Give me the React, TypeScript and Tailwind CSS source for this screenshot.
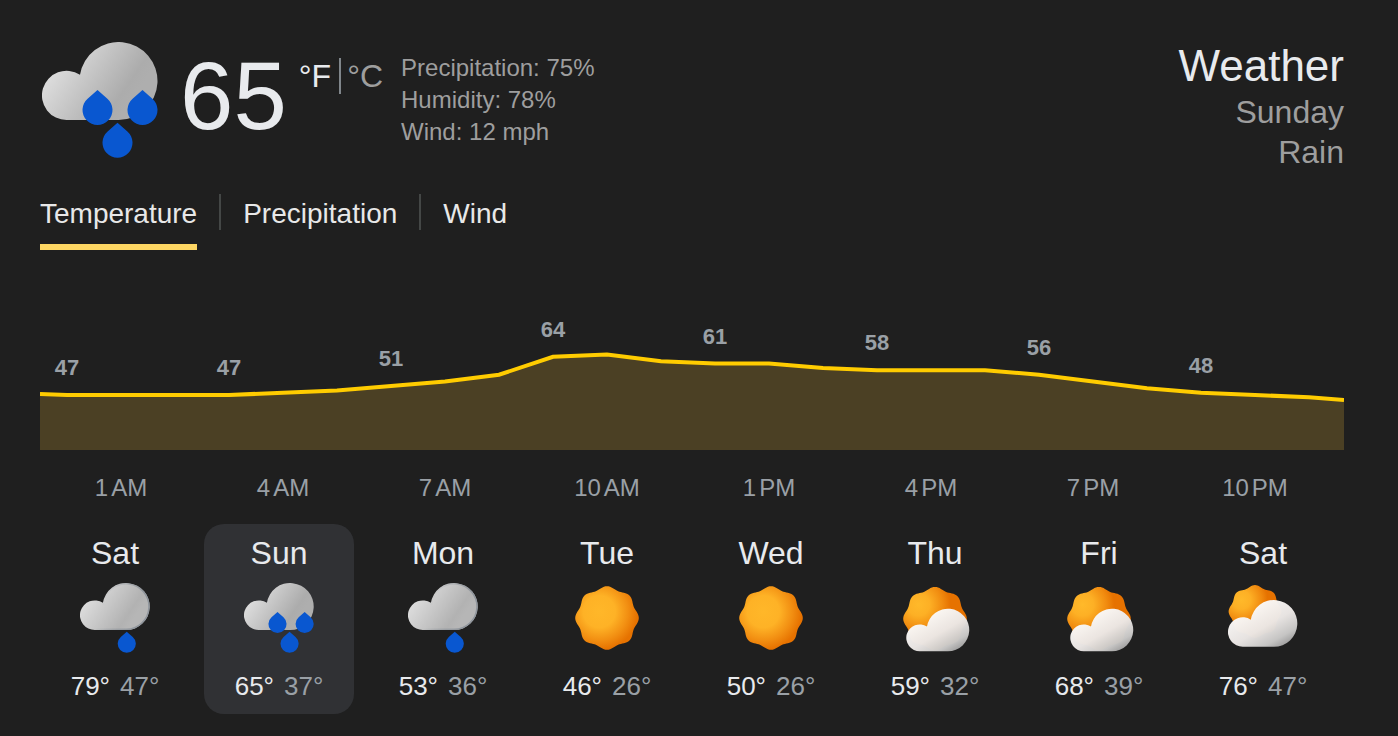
import { useId, useState } from "react";
import clsx from "clsx";

type IconName = "drizzle" | "rain" | "sunny" | "partly" | "mostly";

const HOURLY = [47, 47, 47, 47, 48, 49, 51, 53, 56, 64, 65, 62, 61, 61, 59, 58, 58, 58, 56, 53, 50, 48, 47, 46];
const TIMES = [
  ["1", "AM"],
  ["4", "AM"],
  ["7", "AM"],
  ["10", "AM"],
  ["1", "PM"],
  ["4", "PM"],
  ["7", "PM"],
  ["10", "PM"],
];
const TABS = ["Temperature", "Precipitation", "Wind"];

const DAYS: { name: string; icon: IconName; label: string; high: number; low: number }[] = [
  { name: "Sat", icon: "drizzle", label: "Showers", high: 79, low: 47 },
  { name: "Sun", icon: "rain", label: "Rain", high: 65, low: 37 },
  { name: "Mon", icon: "drizzle", label: "Showers", high: 53, low: 36 },
  { name: "Tue", icon: "sunny", label: "Sunny", high: 46, low: 26 },
  { name: "Wed", icon: "sunny", label: "Sunny", high: 50, low: 26 },
  { name: "Thu", icon: "partly", label: "Partly cloudy", high: 59, low: 32 },
  { name: "Fri", icon: "partly", label: "Partly cloudy", high: 68, low: 39 },
  { name: "Sat", icon: "mostly", label: "Mostly cloudy", high: 76, low: 47 },
];

const CLOUD = "M25 78A24.6 24.6 0 1 1 38 32.8A39 39 0 1 1 76.5 78Z";
const DROP = "M0 -20L9.9 -11.3A15 15 0 1 1 -9.9 -11.3Z";

// eight-lobed disc with an outer radius just under 32
const SUN =
  "M" +
  Array.from({ length: 128 }, (_, i) => {
    const a = (i / 128) * Math.PI * 2;
    const r = 30.4 + 1.4 * Math.cos(8 * a);
    return `${(r * Math.cos(a)).toFixed(2)} ${(r * Math.sin(a)).toFixed(2)}`;
  }).join("L") +
  "Z";

function Sun({ id, transform, shaded }: { id: string; transform: string; shaded?: boolean }) {
  return (
    <g transform={transform}>
      {shaded ? (
        <radialGradient id={id} cx="0.24" cy="0.28" r="0.5">
          <stop offset="0" stopColor="#ffb92a" />
          <stop offset="0.35" stopColor="#fdb025" />
          <stop offset="0.75" stopColor="#f18c10" />
          <stop offset="1" stopColor="#e67200" />
        </radialGradient>
      ) : (
        <radialGradient id={id} cx="0.38" cy="0.4" r="0.6">
          <stop offset="0" stopColor="#ffb729" />
          <stop offset="0.42" stopColor="#feb226" />
          <stop offset="0.75" stopColor="#f28f12" />
          <stop offset="1" stopColor="#e67200" />
        </radialGradient>
      )}
      <path d={SUN} fill={`url(#${id})`} />
    </g>
  );
}

function RainCloud({ id, outlined }: { id: string; outlined?: boolean }) {
  return (
    <>
      <linearGradient id={id} gradientUnits="userSpaceOnUse" x1="20" y1="22" x2="84" y2="66">
        <stop offset="0" stopColor="#dadada" />
        <stop offset="0.85" stopColor={outlined ? "#b2b2b2" : "#acacac"} />
        <stop offset="1" stopColor={outlined ? "#b6b6b6" : "#aeaeae"} />
      </linearGradient>
      <path d={CLOUD} fill={`url(#${id})`} />
      {outlined && (
        <>
          <linearGradient id={`${id}e`} gradientUnits="userSpaceOnUse" x1="40" y1="20" x2="100" y2="40">
            <stop offset="0" stopColor="#8f959c" stopOpacity="0" />
            <stop offset="1" stopColor="#8f959c" />
          </linearGradient>
          <clipPath id={`${id}c`}>
            <path d={CLOUD} />
          </clipPath>
          <path d={CLOUD} fill="none" stroke={`url(#${id}e)`} strokeWidth="5" clipPath={`url(#${id}c)`} />
        </>
      )}
    </>
  );
}

function WhiteCloud({ id, transform }: { id: string; transform: string }) {
  return (
    <g transform={transform}>
      <linearGradient id={id} gradientUnits="userSpaceOnUse" x1="42" y1="8" x2="88" y2="88">
        <stop offset="0" stopColor="#fcfaf8" />
        <stop offset="0.45" stopColor="#ebe7e5" />
        <stop offset="0.75" stopColor="#c9c8c7" />
        <stop offset="1" stopColor="#8d8d8d" />
      </linearGradient>
      <path d={CLOUD} fill={`url(#${id})`} fillOpacity="0.98" />
    </g>
  );
}

function WeatherIcon({ name, label, className }: { name: IconName; label: string; className: string }) {
  const id = useId();
  const wet = name === "rain" || name === "drizzle";
  return (
    <svg role="img" aria-label={label} viewBox={wet ? "0 0 116 116" : "0 0 70 70"} className={className}>
      {name === "rain" && (
        <>
          <RainCloud id={id} />
          <g fill="#0957d0">
            <path d={DROP} transform="translate(55.5 68)" />
            <path d={DROP} transform="translate(100.5 68)" />
            <path d={DROP} transform="translate(75.5 100.7)" />
          </g>
        </>
      )}
      {name === "drizzle" && (
        <>
          <RainCloud id={id} outlined />
          <path d={DROP} fill="#0957d0" transform="translate(77.5 100.7)" />
        </>
      )}
      {name === "sunny" && <Sun id={id} transform="translate(35 35)" />}
      {name === "partly" && (
        <>
          <Sun id={`${id}s`} transform="translate(35 35.7)" shaded />
          <WhiteCloud id={id} transform="translate(6.3 25.7) scale(0.545)" />
        </>
      )}
      {name === "mostly" && (
        <>
          <Sun id={`${id}s`} transform="translate(27 28.5) scale(0.83)" shaded />
          <WhiteCloud id={id} transform="translate(0 17) scale(0.6)" />
        </>
      )}
    </svg>
  );
}

const chartY = (t: number) => 95 - (t - 47) * 2.25;

function TemperatureChart() {
  const line = [
    `0,${chartY(47.5)}`,
    ...HOURLY.map((t, i) => `${27 + i * 54},${chartY(t)}`),
    `1304,${chartY(44.8)}`,
  ].join(" ");

  return (
    <div className="mt-[50px]">
      <div className="grid">
        <svg
          viewBox="0 0 1304 150"
          preserveAspectRatio="none"
          className="col-start-1 row-start-1 h-[150px] w-full"
          aria-hidden="true"
        >
          <polygon points={`0,150 ${line} 1304,150`} fill="#4b4024" />
          <polyline points={line} fill="none" stroke="#ffcc00" strokeWidth="4" vectorEffect="non-scaling-stroke" />
        </svg>
        <div className="col-start-1 row-start-1 grid grid-cols-8 pr-2">
          {HOURLY.filter((_, i) => i % 3 === 0).map((t, i) => (
            <div
              key={i}
              className="w-1/3 text-center text-[22px] leading-6 font-bold text-[#9aa0a6]"
              style={{ marginTop: chartY(t) - 39 }}
            >
              {t}
            </div>
          ))}
        </div>
      </div>
      <div className="mt-[22px] grid grid-cols-8 pr-2 text-2xl leading-8 text-[#9aa0a6]">
        {TIMES.map(([hour, period]) => (
          <div key={hour + period} className="flex justify-center gap-[3px]">
            <span>{hour}</span>
            <span>{period}</span>
          </div>
        ))}
      </div>
    </div>
  );
}

export default function App() {
  const [tab, setTab] = useState(0);
  const [day, setDay] = useState(1);
  const [unit, setUnit] = useState("F");

  return (
    <main className="min-h-screen bg-[#1f1f1f] pt-10 pr-[54px] pb-[22px] pl-10 font-['Liberation_Sans',Arial,sans-serif] text-[#e8eaed]">
      <header className="flex items-start">
        <WeatherIcon name="rain" label="Rain" className="m-[2px] size-[116px] shrink-0" />
        <div className="mt-2 ml-5 text-8xl leading-[96px]">65</div>
        <div className="mt-[18px] ml-3 flex text-[32px] leading-9">
          <button className={clsx(unit === "F" ? "text-[#e8eaed]" : "text-[#9e9e9e]")} onClick={() => setUnit("F")}>
            °F
          </button>
          <div className="mr-1.5 ml-2 w-0.5 bg-[#80868b]" />
          <button className={clsx(unit === "C" ? "text-[#e8eaed]" : "text-[#9e9e9e]")} onClick={() => setUnit("C")}>
            °C
          </button>
        </div>
        <div className="mt-3 ml-[18px] text-2xl leading-8 text-[#9e9e9e]">
          <div>Precipitation: 75%</div>
          <div>Humidity: 78%</div>
          <div>Wind: 12 mph</div>
        </div>
        <div className="ml-auto text-right text-[32px] leading-10 text-[#9e9e9e]">
          <h1 className="text-[44px] leading-[52px] text-[#e8eaed]">Weather</h1>
          <div>Sunday</div>
          <div>Rain</div>
        </div>
      </header>

      <div role="tablist" className="mt-[22px] flex gap-[22px]">
        {TABS.map((name, i) => (
          <div key={name} className="flex gap-[22px]">
            {i > 0 && <div className="h-9 w-0.5 bg-[#444746]" />}
            <button
              role="tab"
              aria-selected={tab === i}
              onClick={() => setTab(i)}
              className={clsx(
                "border-b-6 pb-2.5 text-[28px] leading-10 text-[#e8e8e8]",
                tab === i ? "border-[#fdd663]" : "border-transparent",
              )}
            >
              {name}
            </button>
          </div>
        ))}
      </div>

      <TemperatureChart />

      <div className="mt-5 grid grid-cols-8 gap-[14px] pr-1.5">
        {DAYS.map((d, i) => (
          <button
            key={i}
            aria-pressed={day === i}
            onClick={() => setDay(i)}
            className={clsx("flex flex-col items-center rounded-[20px] pt-[9px] pb-3", day === i && "bg-[#303134]")}
          >
            <span className="text-[32px] leading-10">{d.name}</span>
            <WeatherIcon name={d.icon} label={d.label} className="mt-2.5 size-[70px]" />
            <span className="mt-[17px] flex gap-2.5 text-[26px] leading-8">
              <span>{d.high}°</span>
              <span className="text-[#9aa0a6]">{d.low}°</span>
            </span>
          </button>
        ))}
      </div>
    </main>
  );
}
